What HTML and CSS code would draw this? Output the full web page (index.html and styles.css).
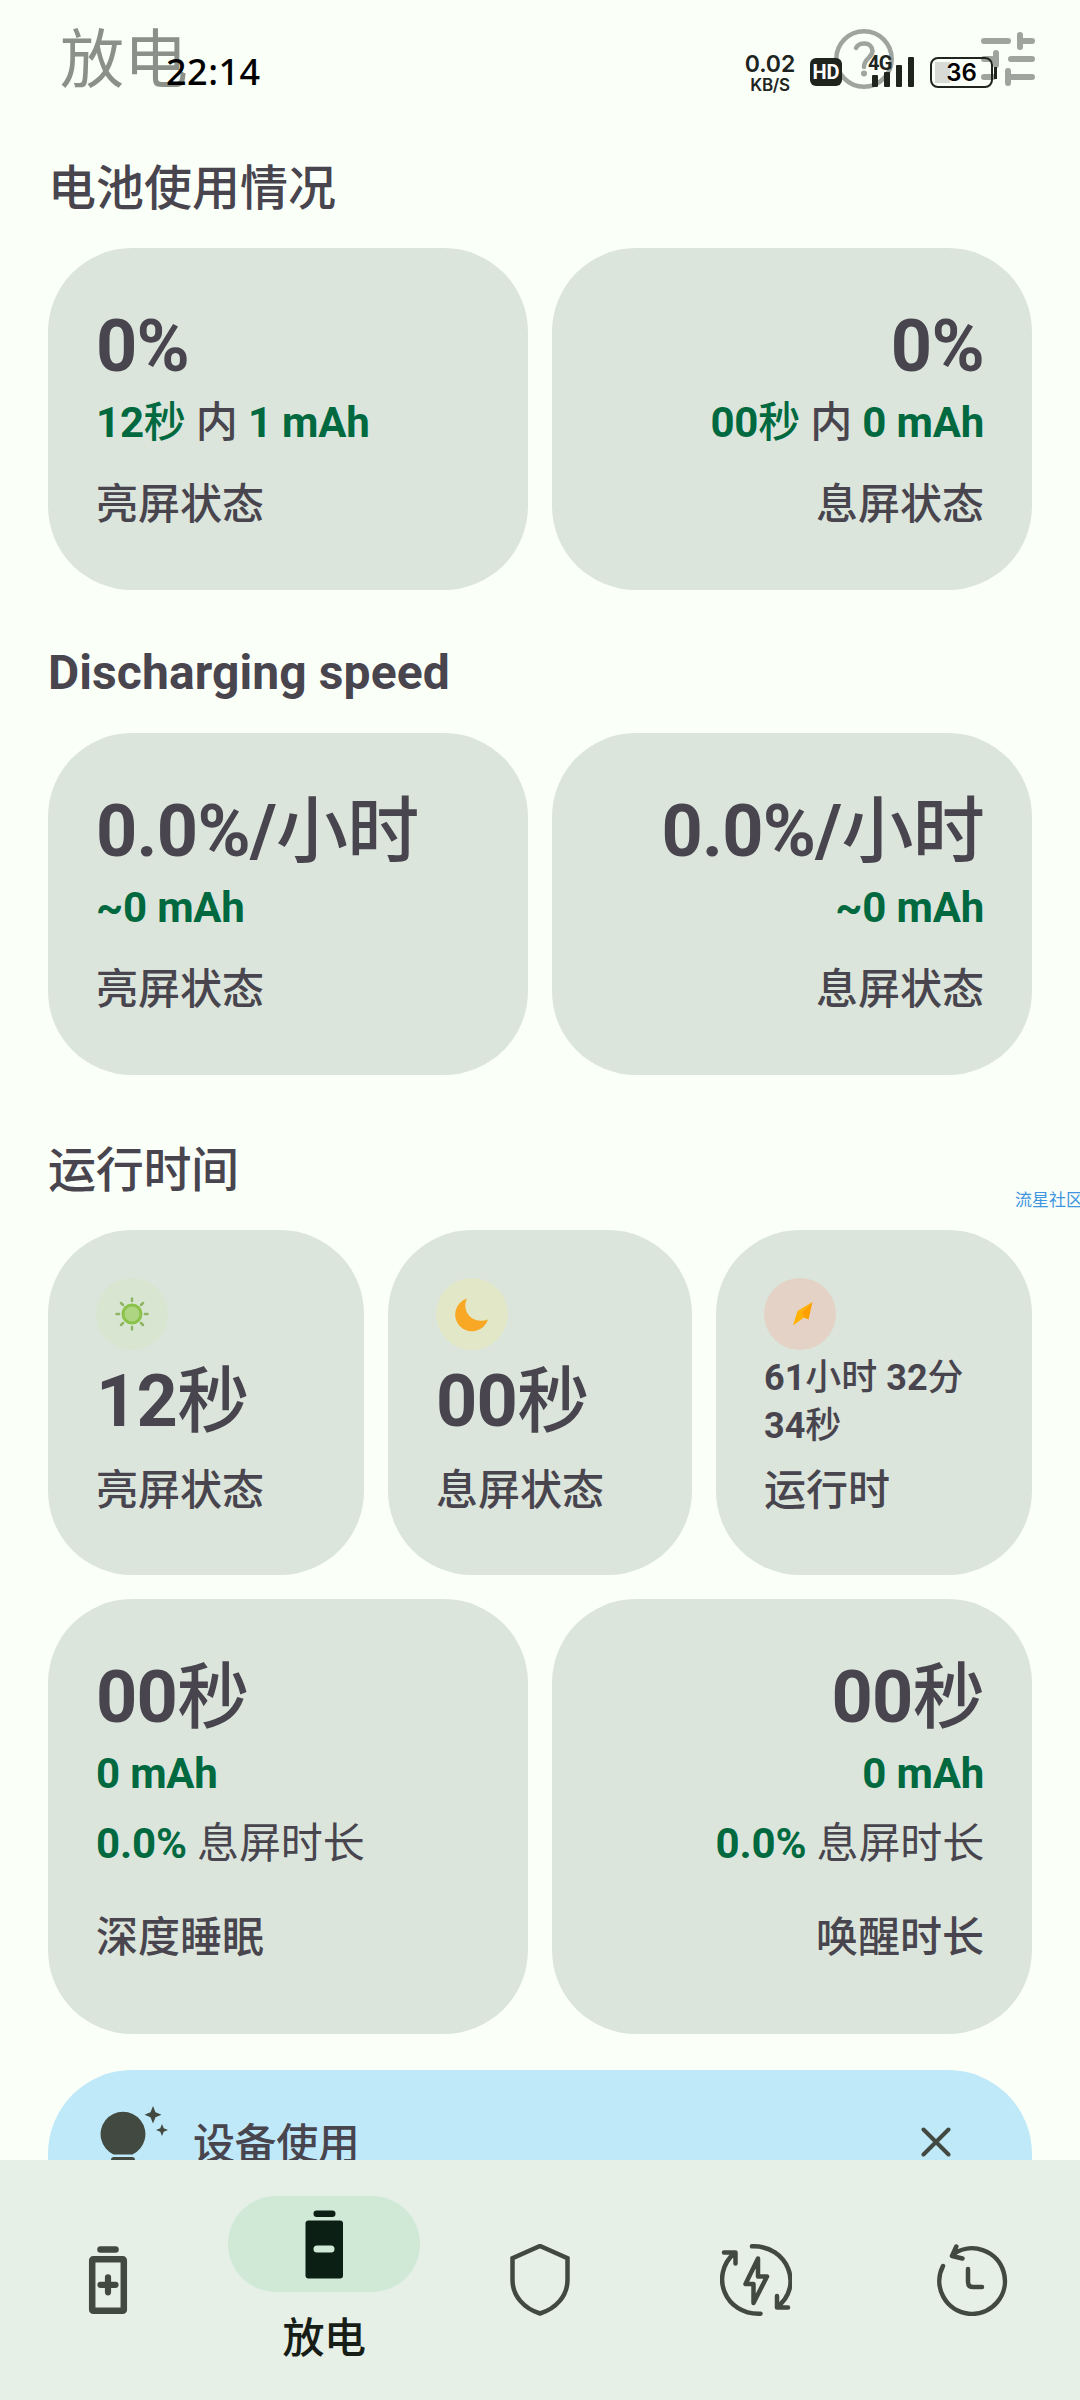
FILE: index.html
```html
<!DOCTYPE html>
<html lang="zh-CN">
<head>
<meta charset="utf-8">
<title>放电</title>
<link rel="stylesheet" href="styles.css">
</head>
<body>
<div class="screen">
  <header class="top">
    <div class="appbar">
      <h1 class="title">放电</h1>
      <div class="actions">
        <svg class="help" viewBox="0 0 60 60" fill="none" stroke="#9fa49e" stroke-width="4.500"><circle cx="30" cy="30" r="27.700"/><path d="M22 19C25 12.500 38 12.500 38.500 22C38.500 29 30 29 30 38" stroke-linecap="round"/><circle cx="30" cy="44.500" r="3" fill="#9fa49e" stroke="none"/></svg>
        <svg class="tune" viewBox="0 0 54 54" fill="none" stroke="#9fa49e" stroke-width="6" stroke-linecap="round"><path d="M3 9H27M39 3V15M42 9H51M3 27H15M15 21V33M30 27H51M3 45H12M27 39V51M30 45H51"/></svg>
      </div>
    </div>
    <div class="status">
      <span class="clock">22:14</span>
      <div class="status-right">
        <div class="speed"><span class="speed-num">0.02</span><span class="speed-unit">KB/S</span></div>
        <span class="hd">HD</span>
        <div class="signal"><span class="net">4G</span><i class="b1"></i><i class="b2"></i><i class="b3"></i><i class="b4"></i></div>
        <div class="battery"><span>36</span></div>
      </div>
    </div>
  </header>

  <main class="content">
    <h2 class="heading">电池使用情况</h2>
    <div class="row pair">
      <section class="card"><div class="big">0%</div><div class="sub"><b>12<span class="cjk">秒</span></b> 内 <b>1 mAh</b></div><div class="label">亮屏状态</div></section>
      <section class="card right"><div class="big">0%</div><div class="sub"><b>00<span class="cjk">秒</span></b> 内 <b>0 mAh</b></div><div class="label">息屏状态</div></section>
    </div>
    <h2 class="heading second">Discharging speed</h2>
    <div class="row pair">
      <section class="card"><div class="big">0.0%/<span class="cjk">小时</span></div><div class="sub"><b>~0 mAh</b></div><div class="label">亮屏状态</div></section>
      <section class="card right"><div class="big">0.0%/<span class="cjk">小时</span></div><div class="sub"><b>~0 mAh</b></div><div class="label">息屏状态</div></section>
    </div>
    <h2 class="heading third">运行时间</h2>
    <div class="row triple">
      <section class="card">
        <svg class="badge sun" viewBox="0 0 72 72"><circle cx="36" cy="36" r="9" fill="#aed581" stroke="#8bc34a" stroke-width="3"/><path d="M36 20.500V23M36 49V51.500M20.500 36H23M49 36H51.500M25 25L27 27M45 45L47 47M47 25L45 27M27 45L25 47" stroke="#8fb466" stroke-width="2.500" stroke-linecap="round"/></svg>
        <div class="big">12<span class="cjk">秒</span></div><div class="label">亮屏状态</div>
      </section>
      <section class="card">
        <svg class="badge moon" viewBox="0 0 72 72"><path d="M31 20.500C25 33 36 47 52 41.500A16.800 16.800 0 1 1 31 20.500Z" fill="#f9a825"/></svg>
        <div class="big">00<span class="cjk">秒</span></div><div class="label">息屏状态</div>
      </section>
      <section class="card">
        <svg class="badge bolt" viewBox="0 0 72 72"><path d="M48.500 24L33.500 33L29 47.500L40 39.500L37.500 34.500Z" fill="#ffb300"/><path d="M48.500 24L37.500 34.500L40 39.500L44.500 41.500Z" fill="#ffa000"/></svg>
        <div class="long">61<span class="cjk">小时</span> 32<span class="cjk">分</span><br>34<span class="cjk">秒</span></div><div class="label">运行时</div>
      </section>
    </div>
    <div class="row pair tall">
      <section class="card"><div class="big">00<span class="cjk">秒</span></div><div class="sub"><b>0 mAh</b></div><div class="share"><b>0.0%</b> 息屏时长</div><div class="label">深度睡眠</div></section>
      <section class="card right"><div class="big">00<span class="cjk">秒</span></div><div class="sub"><b>0 mAh</b></div><div class="share"><b>0.0%</b> 息屏时长</div><div class="label">唤醒时长</div></section>
    </div>
    <section class="tip">
      <svg class="bulb" viewBox="0 0 72 72" fill="#424940"><path d="M17.500 48.500H36.500A22.400 22.400 0 1 0 17.500 48.500Z"/><rect x="15" y="51" width="24" height="8" rx="3"/><path d="M57 0L59.500 6.300L65.500 8.700L59.500 11.200L57 17.500L54.500 11.200L48.500 8.700L54.500 6.300ZM66 18L67.700 22.300L72 24L67.700 25.700L66 30L64.300 25.700L60 24L64.300 22.300Z"/></svg>
      <span class="tip-text">设备使用</span>
      <svg class="close" viewBox="0 0 30 30" stroke="#424940" stroke-width="4" stroke-linecap="round"><path d="M2.500 2.500L27.500 27.500M27.500 2.500L2.500 27.500"/></svg>
    </section>
  </main>

  <nav class="nav">
    <a class="item"><svg class="icon" viewBox="0 0 72 72" fill="none" stroke="#424940"><path d="M28.500 5.500H43.500" stroke-width="6.500" stroke-linecap="round"/><rect x="20.200" y="15.200" width="31.600" height="51.500" rx="1" stroke-width="6.500"/><path d="M28.500 40.800H43.500M36 33.300V48.300" stroke-width="6.200" stroke-linecap="round"/></svg></a>
    <a class="item active"><span class="pill"><svg class="icon" viewBox="0 0 72 72"><rect x="25.500" y="2.500" width="22" height="6.500" rx="3.250" fill="#0b1f14"/><rect x="17.500" y="12.500" width="37.500" height="58" rx="3" fill="#0b1f14"/><rect x="25.500" y="37.500" width="21" height="7" rx="3.500" fill="#d0e8d6"/></svg></span><span class="nav-label">放电</span></a>
    <a class="item"><svg class="icon" viewBox="0 0 72 72" fill="none" stroke="#424940" stroke-width="4.500"><path d="M36 2L63.500 14.200V36C63.500 52 52 64.500 36 69.500C20 64.500 8.500 52 8.500 36V14.200Z"/></svg></a>
    <a class="item"><svg class="icon" viewBox="0 0 72 72" fill="none" stroke="#424940" stroke-width="4.500" stroke-linecap="round" stroke-linejoin="round"><path d="M32 2.300C68 1 84 43 57 63M57 52V63.500H68M40.500 69.700C4.500 71 -10.500 31 14.500 9M4 8.500H15.500V19.500M38 14.500L25.500 40H33.500V59L47 32.500H38Z"/></svg></a>
    <a class="item"><svg class="icon" viewBox="0 0 72 72" fill="none" stroke="#424940" stroke-width="4.500" stroke-linecap="round" stroke-linejoin="round"><path d="M7 22A32.800 32.800 0 1 0 16.500 10.800M20.300 2.500L16 12L26.500 14.500M32 25V38Q32 43 37 43H46"/></svg></a>
  </nav>
  <span class="watermark">流星社区</span>
</div>
</body>
</html>
```
FILE: styles.css
```css
* { box-sizing: border-box; }
body { margin: 0; background: #fafff8; }
.screen {
  position: relative;
  width: 1080px;
  height: 2400px;
  overflow: hidden;
  display: flex;
  flex-direction: column;
  background: #fafff8;
  color: #48454e;
  font-family: Roboto, "Noto Sans CJK SC", sans-serif;
}
h1, h2 { margin: 0; font-weight: 400; }
svg { display: block; }
.top { position: relative; height: 144px; flex: none; }
.appbar {
  display: flex;
  justify-content: space-between;
  align-items: flex-start;
  padding: 20px 45px 0 60px;
}
.title { padding-top: 3px; font-size: 64px; line-height: 76px; font-weight: 400; color: #8b908a; }
.actions { display: flex; gap: 87px; }
.help { width: 60px; height: 60px; margin-top: 9px; }
.tune { width: 54px; height: 54px; margin-top: 12px; }
.status {
  position: absolute;
  inset: 50px 87px auto 166px;
  height: 44px;
  display: flex;
  justify-content: space-between;
  align-items: center;
  color: #20241f;
}
.clock { font: 500 36px/44px "Noto Sans", sans-serif; letter-spacing: .5px; color: #000; }
.status-right { display: flex; align-items: center; }
.speed {
  display: flex;
  flex-direction: column;
  align-items: center;
  width: 52px;
  margin-right: 14px;
  padding-top: 2px;
  font-family: Inter, sans-serif;
  font-weight: 600;
}
.speed-num { font-size: 23px; line-height: 23px; }
.speed-unit { font-size: 17px; line-height: 18px; letter-spacing: -.3px; }
.hd {
  width: 32px;
  height: 28px;
  margin-right: 30px;
  border-radius: 6px;
  background: #20241f;
  color: #fff;
  font: 700 20px/28px Roboto, sans-serif;
  text-align: center;
}
.signal {
  position: relative;
  display: flex;
  align-items: flex-end;
  gap: 6px;
  height: 30px;
  margin-right: 16px;
}
.signal i { width: 6px; border-radius: 1px; background: #20241f; }
.b1 { height: 12px; }
.b2 { height: 15px; }
.b3 { height: 22px; }
.b4 { height: 30px; }
.net { position: absolute; left: -4px; top: -4px; font: 700 20px/20px Roboto, sans-serif; letter-spacing: -.8px; }
.battery {
  position: relative;
  width: 63px;
  height: 31px;
  border: 2px solid #20241f;
  border-radius: 8px;
  background: linear-gradient(#d8dad6, #d8dad6) 3px 3px / 15px 21px no-repeat;
  color: #000;
  font: 600 24px/27px Inter, sans-serif;
  text-align: center;
}
.battery::after {
  content: "";
  position: absolute;
  right: -6px;
  top: 8px;
  width: 3px;
  height: 12px;
  background: #20241f;
}
.content { flex: 1; min-height: 0; overflow: hidden; padding: 0 48px; }
.heading { height: 104px; padding-top: 15px; font-size: 48px; line-height: 60px; font-weight: 500; }
.second { height: 143px; padding-top: 53px; font-weight: 700; letter-spacing: .1px; }
.third { height: 155px; padding-top: 66px; letter-spacing: -.3px; }
.row { display: grid; gap: 24px; }
.pair { grid-template-columns: 1fr 1fr; }
.triple { grid-template-columns: 316px 304px 316px; margin-bottom: 24px; }
.card { height: 342px; padding: 51px 48px 0; border-radius: 84px; background: #dce5dc; white-space: nowrap; }
.right { text-align: right; }
.cjk { font-weight: 500; }
.big { font-size: 72px; line-height: 96px; font-weight: 700; letter-spacing: -.7px; }
.sub { font-size: 42px; line-height: 56px; font-weight: 500; letter-spacing: -.2px; }
.sub b, .share b { font-weight: 700; color: #00693f; }
.label { margin-top: 26px; font-size: 42px; line-height: 56px; font-weight: 500; }
.triple .card { height: 345px; padding-top: 48px; }
.triple .big { margin-top: 4px; }
.triple .label { margin-top: 13px; }
.badge { width: 72px; height: 72px; border-radius: 50%; }
.sun { background: #d8e6d1; }
.moon { background: #e1e7c7; }
.bolt { background: #e3d2c5; }
.long { margin-top: 4px; height: 96px; font-size: 36px; line-height: 48px; font-weight: 700; }
.tall .card { height: 435px; }
.share { margin-top: 14px; font-size: 42px; line-height: 56px; font-weight: 400; letter-spacing: -.15px; }
.tall .label { margin-top: 38px; }
.tip {
  display: flex;
  align-items: flex-start;
  height: 168px;
  margin-top: 36px;
  padding: 36px 81px 0 48px;
  border-radius: 84px 84px 0 0;
  background: #bfe9f9;
}
.bulb { width: 72px; height: 72px; }
.tip-text { flex: 1; margin-left: 25px; padding-top: 2px; font-size: 42px; line-height: 74px; font-weight: 500; letter-spacing: -.4px; }
.close { width: 30px; height: 30px; margin-top: 21px; }
.nav {
  flex: none;
  height: 240px;
  display: grid;
  grid-template-columns: repeat(5, 1fr);
  background: #e6f0e7;
}
.item { display: flex; flex-direction: column; align-items: center; padding-top: 84px; }
.icon { width: 72px; height: 72px; }
.active { padding-top: 36px; }
.pill { display: flex; padding: 12px 60px; border-radius: 48px; background: #d0e8d6; }
.nav-label { margin-top: 19px; font-size: 42px; line-height: 56px; font-weight: 500; letter-spacing: -.5px; color: #171d17; }
.watermark {
  position: absolute;
  left: 1015px;
  top: 1188px;
  font-size: 17px;
  line-height: 24px;
  white-space: nowrap;
  color: #3f95e0;
}
```
